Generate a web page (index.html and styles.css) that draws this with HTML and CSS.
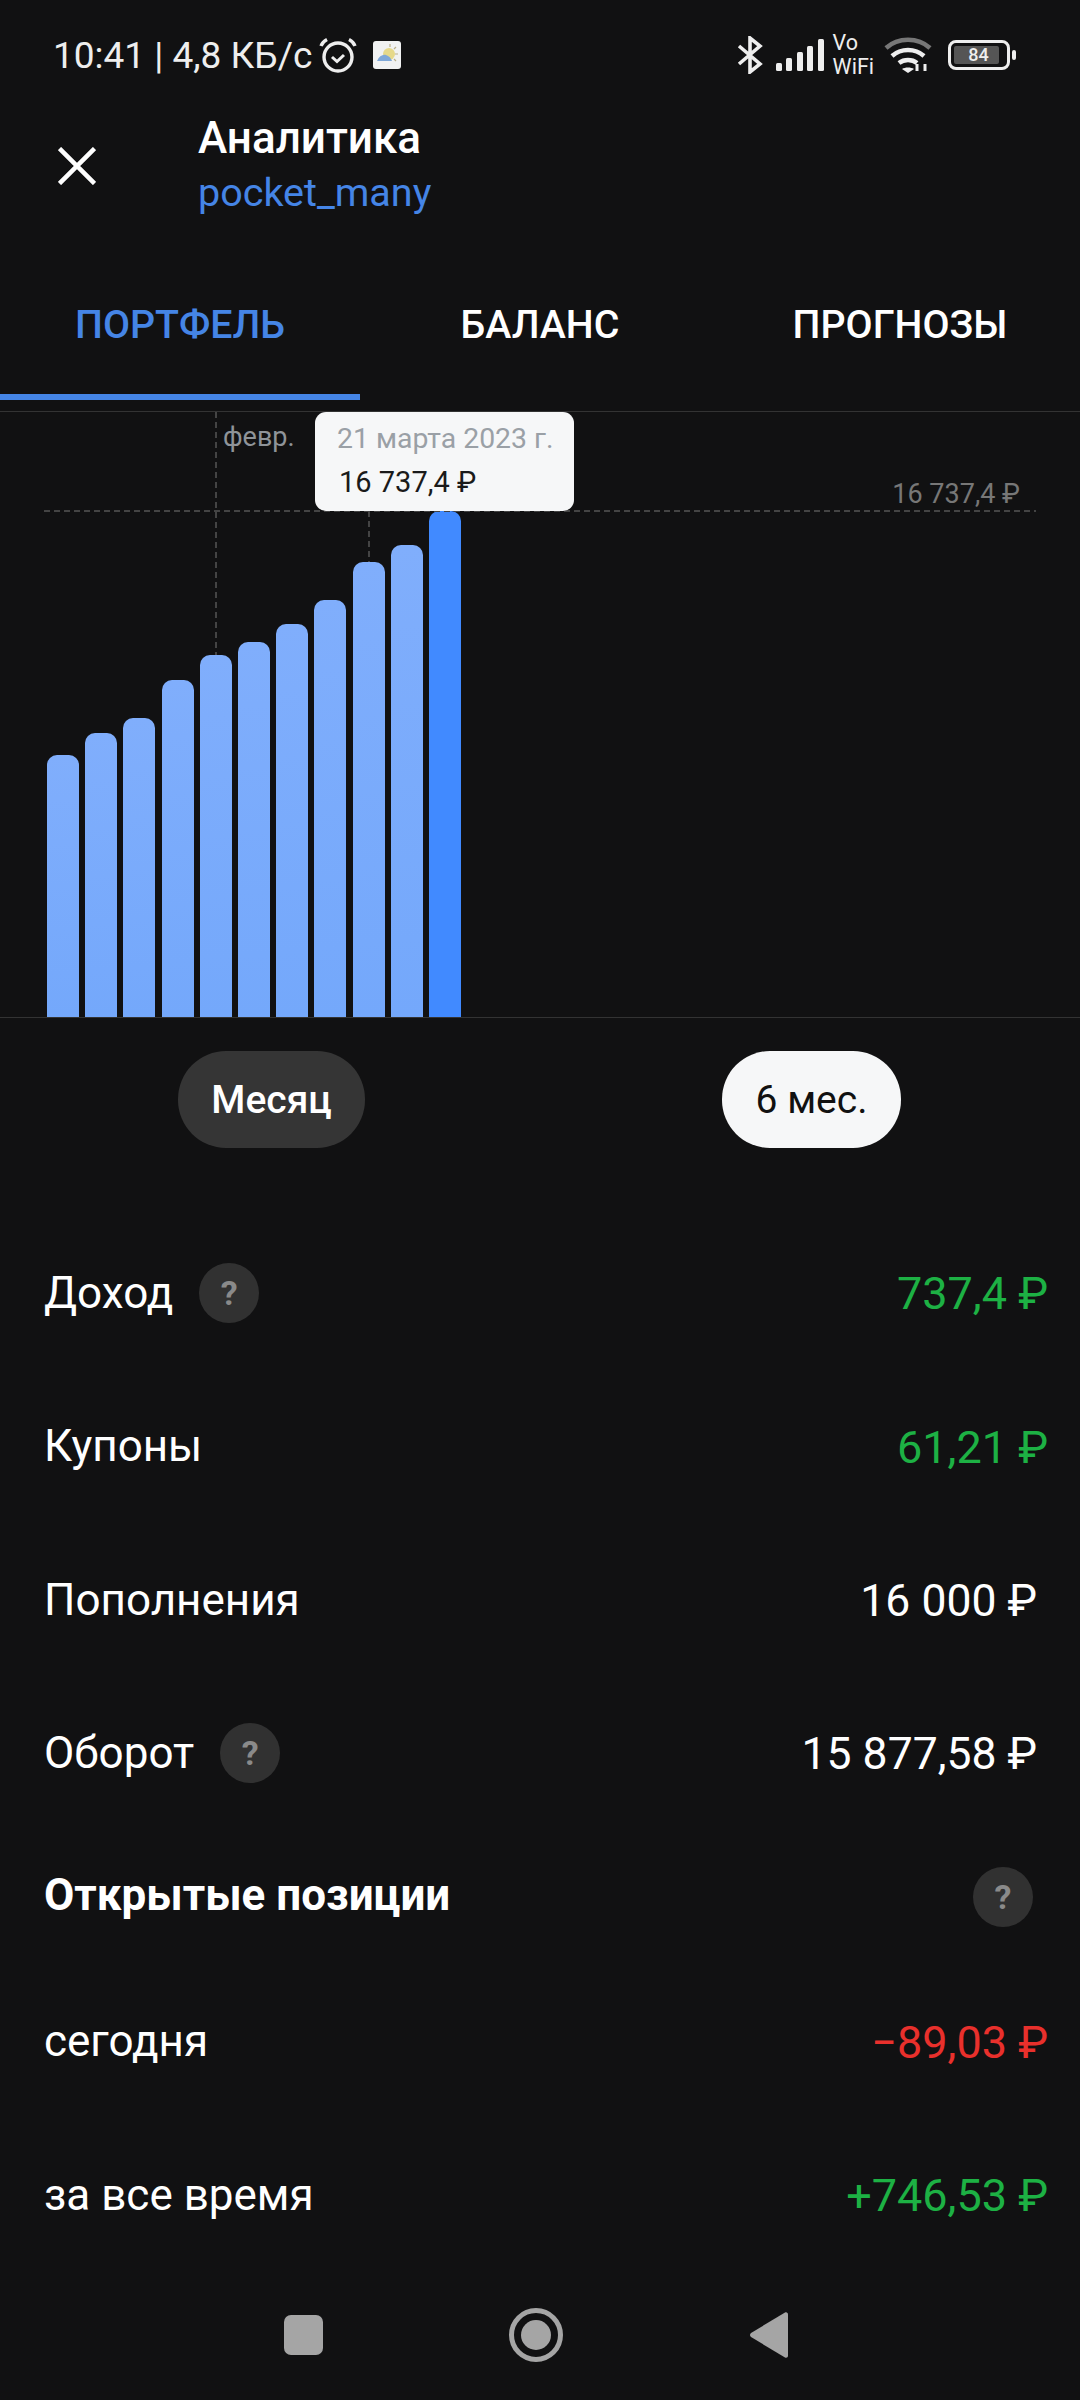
FILE: index.html
```html
<!DOCTYPE html>
<html lang="ru">
<head>
    <meta charset="UTF-8">
    <meta name="viewport" content="width=device-width, initial-scale=1.0">
    <title>Аналитика</title>
    <link rel="stylesheet" href="styles.css">
</head>
<body>
    <div class="status-bar">
        <div class="status-left">
            <span class="status-text">10:41 | 4,8 КБ/с</span>
            <svg class="icon-alarm" width="38" height="36" viewBox="0 0 38 36" fill="none" stroke="#eee">
                <circle cx="19" cy="20" r="14" stroke-width="3.4"/>
                <path d="M13 20l5 4.500 7-6.500" stroke-width="3"/>
                <path d="M2 9c1-3 3-5 6-6.500M36 9c-1-3-3-5-6-6.500" stroke-width="3.400"/>
            </svg>
            <svg class="icon-weather" width="28" height="28" viewBox="0 0 28 28">
                <rect width="28" height="28" rx="3" fill="#f1f2f2"/>
                <path d="M17 3v3M25 13h-3M23 6l-2 2M23 20l-2-2" stroke="#b9b08a" stroke-width="1.200"/>
                <circle cx="16" cy="13" r="6" fill="#e6d98a"/>
                <path d="M4 20c2-5 6-7 9-6 3 1 5 3 6 6z" fill="#7fa8d8"/>
            </svg>
        </div>
        <div class="status-right">
            <svg class="icon-bt" width="26" height="38" viewBox="0 0 26 38" fill="none" stroke="#eee" stroke-width="3.600">
                <path d="M2 10l21 18-10 8V2l10 8L2 28"/>
            </svg>
            <svg class="icon-signal" width="48" height="32" viewBox="0 0 48 32" fill="#eee">
                <rect x="0" y="24" width="6" height="8" rx="1.500"/>
                <rect x="10" y="19" width="6" height="13" rx="1.500"/>
                <rect x="21" y="13" width="6" height="19" rx="1.500"/>
                <rect x="31" y="7" width="6" height="25" rx="1.500"/>
                <rect x="42" y="0" width="6" height="32" rx="1.500"/>
            </svg>
            <div class="vowifi"><span>Vo</span><span>WiFi</span></div>
            <svg class="icon-wifi" width="48" height="36" viewBox="0 0 48 36" fill="none" stroke-width="4.500">
                <path d="M2 11C14 0 34 0 46 11" stroke="#777"/>
                <path d="M8 19c9-8 23-8 32 0" stroke="#eee"/>
                <path d="M15 26c5-4 13-4 18 0" stroke="#eee"/>
                <path d="M24 36l-6-4c3-2 9-2 12 0z" fill="#eee" stroke="none"/>
                <path d="M33 27v7M41 27v7" stroke="#eee" stroke-width="3"/>
            </svg>
            <div class="battery">
                <div class="battery-body"><span class="battery-level">84</span></div>
                <div class="battery-cap"></div>
            </div>
        </div>
    </div>

    <div class="header">
        <svg class="icon-close" width="38" height="38" viewBox="0 0 38 38" stroke="#fff" stroke-width="4.500">
            <path d="M1.500 1.500l35 35M36.500 1.500l-35 35"/>
        </svg>
        <div class="header-titles">
            <div class="header-title">Аналитика</div>
            <div class="header-sub">pocket_many</div>
        </div>
    </div>

    <div class="tabs">
        <div class="tab tab-active">ПОРТФЕЛЬ</div>
        <div class="tab">БАЛАНС</div>
        <div class="tab">ПРОГНОЗЫ</div>
    </div>

    <div class="chart">
        <div class="bars">
            <div class="bar" style="height:262px"></div>
            <div class="bar" style="height:284px"></div>
            <div class="bar" style="height:299px"></div>
            <div class="bar" style="height:337px"></div>
            <div class="bar" style="height:362px"></div>
            <div class="bar" style="height:375px"></div>
            <div class="bar" style="height:393px"></div>
            <div class="bar" style="height:417px"></div>
            <div class="bar" style="height:455px"></div>
            <div class="bar" style="height:472px"></div>
            <div class="bar bar-active" style="height:506px"></div>
        </div>
        <div class="guide-h"></div>
        <div class="guide-v guide-feb"></div>
        <div class="guide-v guide-mar"></div>
        <div class="axis-label">февр.</div>
        <div class="max-label">16 737,4 ₽</div>
        <div class="tooltip">
            <div class="tooltip-date">21 марта 2023 г.</div>
            <div class="tooltip-value">16 737,4 ₽</div>
        </div>
    </div>

    <div class="periods">
        <div class="pill pill-dark">Месяц</div>
        <div class="pill pill-light">6 мес.</div>
    </div>

    <div class="rows">
        <div class="row">
            <div class="row-label">Доход <span class="help">?</span></div>
            <div class="value green">737,4 ₽</div>
        </div>
        <div class="row">
            <div class="row-label">Купоны</div>
            <div class="value green">61,21 ₽</div>
        </div>
        <div class="row">
            <div class="row-label">Пополнения</div>
            <div class="value white">16 000 ₽</div>
        </div>
        <div class="row">
            <div class="row-label">Оборот <span class="help">?</span></div>
            <div class="value white">15 877,58 ₽</div>
        </div>
        <div class="section-head">
            <div class="section-title">Открытые позиции</div>
            <span class="help">?</span>
        </div>
        <div class="row">
            <div class="row-label">сегодня</div>
            <div class="value red">−89,03 ₽</div>
        </div>
        <div class="row">
            <div class="row-label">за все время</div>
            <div class="value green">+746,53 ₽</div>
        </div>
    </div>

    <div class="nav-bar">
        <div class="nav-square"></div>
        <div class="nav-home"><div class="nav-dot"></div></div>
        <svg width="38" height="46" viewBox="0 0 38 46" fill="#a5a5a5">
            <path d="M35 .5c1.500-.8 3 .2 3 2v41c0 1.800-1.500 2.800-3 2L1 25c-1.300-1-1.300-3 0-4z"/>
        </svg>
    </div>
</body>
</html>
```

FILE: styles.css
```css
body {
    font-family: Roboto, "Noto Sans", sans-serif;
    margin: 0;
    width: 1080px;
    height: 2400px;
    overflow: hidden;
    background-color: #111112;
    color: #fff;
}
.status-bar {
    height: 110px;
    display: flex;
    justify-content: space-between;
    align-items: center;
    padding: 0 64px 0 53px;
    color: #eee;
}
.status-left, .status-right {
    display: flex;
    align-items: center;
}
.status-text {
    font-size: 37px;
}
.icon-alarm {
    margin-left: 7px;
}
.icon-weather {
    margin-left: 16px;
}
.icon-signal {
    margin-left: 13px;
}
.vowifi {
    display: flex;
    flex-direction: column;
    margin-left: 9px;
    font-size: 21.5px;
    line-height: 24px;
}
.icon-wifi {
    margin-left: 10px;
}
.battery {
    display: flex;
    align-items: center;
    margin-left: 16px;
}
.battery-body {
    width: 62px;
    height: 30px;
    box-sizing: border-box;
    border: 3px solid #eee;
    border-radius: 8px;
    padding: 3px;
}
.battery-level {
    display: block;
    width: 41px;
    height: 18px;
    background-color: #555;
    border-radius: 2px;
    font-size: 18px;
    line-height: 18px;
    text-align: center;
    padding-left: 4px;
    font-weight: 500;
}
.battery-cap {
    width: 4px;
    height: 10px;
    margin-left: 2px;
    background-color: #eee;
    border-radius: 2px;
}
.header {
    height: 112px;
    display: flex;
    align-items: center;
    padding-left: 58px;
}
.header-titles {
    margin-left: 102px;
    padding-bottom: 5px;
}
.header-title {
    font-size: 44px;
    font-weight: 500;
    line-height: 58px;
}
.header-sub {
    font-size: 39.5px;
    line-height: 51px;
    color: #4585e6;
}
.tabs {
    height: 178px;
    display: flex;
    border-bottom: 1px solid #333;
    padding-bottom: 11px;
}
.tab {
    flex: 1;
    display: flex;
    align-items: center;
    justify-content: center;
    font-size: 39.3px;
    font-weight: 500;
    box-sizing: border-box;
    border-bottom: 6px solid transparent;
    padding-top: 34px;
}
.tab-active {
    color: #4585e6;
    border-bottom-color: #4585e6;
}
.chart {
    position: relative;
    height: 605px;
    border-bottom: 1px solid #333;
}
.bars {
    height: 100%;
    display: flex;
    align-items: flex-end;
    gap: 6.2px;
    padding-left: 47px;
}
.bar {
    width: 32px;
    border-radius: 10px 10px 0 0;
    background: linear-gradient(180deg, #80aefc, #74a8fb);
}
.bar-active {
    background: #418aff;
}
.guide-h {
    position: absolute;
    left: 44px;
    right: 44px;
    top: 98px;
    height: 2px;
    background: repeating-linear-gradient(90deg, #444 0 6px, transparent 6px 10px);
}
.guide-v {
    position: absolute;
    width: 2px;
    background: repeating-linear-gradient(180deg, #444 0 6px, transparent 6px 10px);
}
.guide-feb {
    left: 215px;
    top: 0;
    height: 243px;
}
.guide-mar {
    left: 368px;
    top: 99px;
    height: 51px;
}
.axis-label {
    position: absolute;
    left: 223px;
    top: 9px;
    font-size: 27px;
    color: #8f9499;
}
.max-label {
    position: absolute;
    right: 60px;
    top: 66px;
    font-size: 27px;
    color: #777;
}
.tooltip {
    position: absolute;
    left: 315px;
    top: 0;
    width: 259px;
    height: 99px;
    box-sizing: border-box;
    padding: 6px 0 0 22px;
    background-color: #f6f7f8;
    border-radius: 11px;
}
.tooltip-date {
    font-size: 28.4px;
    line-height: 41px;
    color: #9aa0a6;
}
.tooltip-value {
    font-size: 29px;
    line-height: 46px;
    margin-left: 2px;
    color: #1a1a1a;
}
.periods {
    display: flex;
    padding: 33px 0 0 178px;
    height: 165px;
    box-sizing: border-box;
}
.pill {
    height: 97px;
    display: flex;
    align-items: center;
    justify-content: center;
    border-radius: 48px;
    font-size: 39px;
}
.pill-dark {
    width: 187px;
    background-color: #353535;
    font-weight: 500;
}
.pill-light {
    width: 179px;
    margin-left: 357px;
    background-color: #f6f7f8;
    color: #111;
}
.rows {
    padding: 33px 0 0 44px;
}
.row {
    height: 153.5px;
    display: flex;
    justify-content: space-between;
    align-items: center;
    padding-right: 32px;
}
.row-label {
    display: flex;
    align-items: center;
    font-size: 44px;
    gap: 26px;
}
.value {
    font-size: 45px;
    padding-top: 2px;
}
.green {
    color: #1db144;
}
.red {
    color: #e9302c;
}
.white {
    color: #fff;
    font-size: 44.5px;
    margin-right: 11px;
}
.help {
    width: 60px;
    height: 60px;
    display: flex;
    align-items: center;
    justify-content: center;
    border-radius: 50%;
    background-color: #313131;
    color: #8a8a8a;
    font-size: 34px;
    font-weight: 700;
}
.section-head {
    height: 134.5px;
    display: flex;
    justify-content: space-between;
    align-items: center;
    padding-right: 47px;
}
.section-title {
    font-size: 44px;
    font-weight: 700;
    padding-bottom: 5px;
}
.nav-bar {
    position: absolute;
    left: 0;
    right: 0;
    top: 2300px;
    height: 70px;
    display: flex;
    align-items: center;
    padding-left: 284px;
}
.nav-square {
    width: 39px;
    height: 40px;
    border-radius: 7px;
    background-color: #a5a5a5;
}
.nav-home {
    width: 54px;
    height: 54px;
    box-sizing: border-box;
    margin-left: 186px;
    border: 5px solid #a5a5a5;
    border-radius: 50%;
    display: flex;
    align-items: center;
    justify-content: center;
}
.nav-dot {
    width: 30px;
    height: 30px;
    border-radius: 50%;
    background-color: #a5a5a5;
}
.nav-bar svg {
    margin-left: 187px;
}
```
